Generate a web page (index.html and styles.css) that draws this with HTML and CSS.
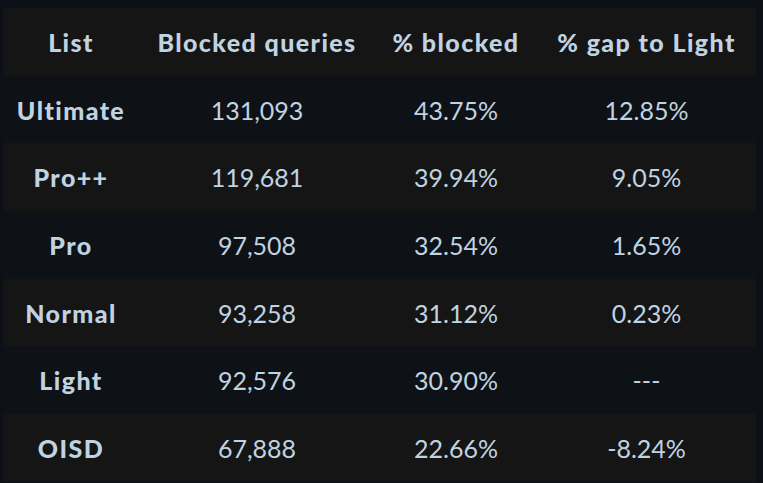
FILE: index.html
```html
<!DOCTYPE html>
<html>
<head>
<meta charset="utf-8">
<link rel="stylesheet" href="styles.css">
</head>
<body>
<table class="results">
  <colgroup>
    <col class="c1"><col class="c2"><col class="c3"><col class="c4">
  </colgroup>
  <thead>
    <tr><th>List</th><th>Blocked queries</th><th>% blocked</th><th>% gap to Light</th></tr>
  </thead>
  <tbody>
    <tr><td class="name">Ultimate</td><td>131,093</td><td>43.75%</td><td>12.85%</td></tr>
    <tr><td class="name">Pro++</td><td>119,681</td><td>39.94%</td><td>9.05%</td></tr>
    <tr><td class="name">Pro</td><td>97,508</td><td>32.54%</td><td>1.65%</td></tr>
    <tr><td class="name">Normal</td><td>93,258</td><td>31.12%</td><td>0.23%</td></tr>
    <tr><td class="name">Light</td><td>92,576</td><td>30.90%</td><td>---</td></tr>
    <tr><td class="name">OISD</td><td>67,888</td><td>22.66%</td><td>-8.24%</td></tr>
  </tbody>
</table>
</body>
</html>
```

FILE: styles.css
```css
html, body {
  margin: 0;
  background: #0d1117;
  height: 100%;
  overflow: hidden;
}
body {
  font-family: "Lato", "Open Sans", sans-serif;
  color: #c0d3e1;
}
.results {
  margin: 8px 0 0 3px;
  border-collapse: collapse;
  table-layout: fixed;
  width: 753px;
  font-size: 25px;
}
.c1 { width: 136px; }
.c2 { width: 236px; }
.c3 { width: 162px; }
.c4 { width: 219px; }
.results tr {
  height: 67.7px;
  background: #0e1116;
}
.results thead tr,
.results tbody tr:nth-child(2n) {
  background: #151515;
}
.results th,
.results td {
  padding: 0 8px;
  text-align: center;
  vertical-align: middle;
  white-space: nowrap;
}
.results th,
.results td.name {
  font-weight: 900;
  letter-spacing: 1.4px;
}
.results td { font-weight: 400; }
```
